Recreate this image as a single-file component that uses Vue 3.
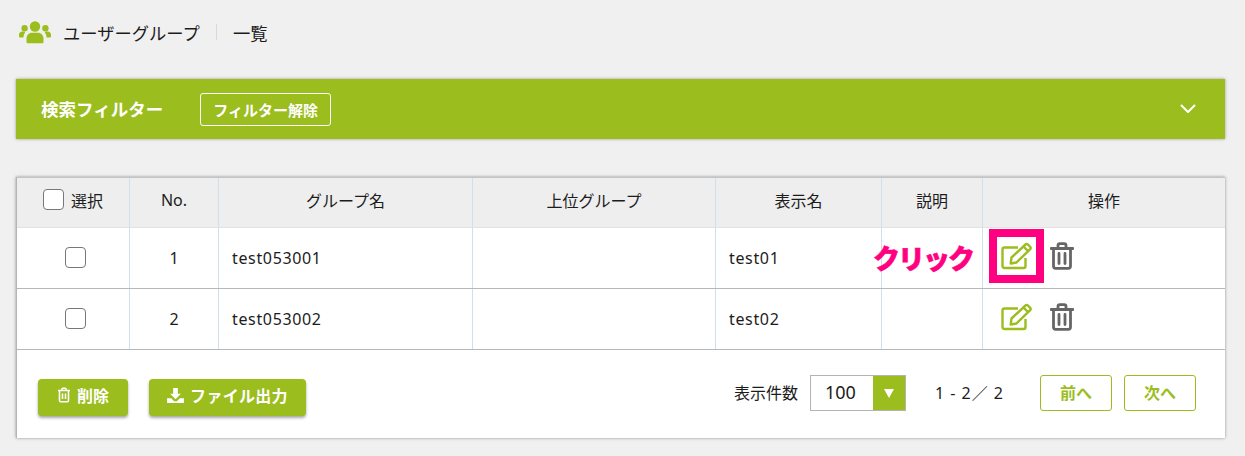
<template>
  <div class="page">
    <header class="title-row">
      <svg class="users-icon" viewBox="0 0 32 24" width="32" height="24">
        <circle cx="16" cy="6.5" r="5.2" />
        <circle cx="5.6" cy="8.2" r="3.2" />
        <circle cx="26.4" cy="8.2" r="3.2" />
        <path d="M7.5 22v-3.5c0-3.6 2.6-5.8 5.4-5.8h6.2c2.8 0 5.4 2.2 5.4 5.8V22c0 .8-.7 1.3-1.4 1.3H8.900c-.7 0-1.400-.5-1.400-1.300z" />
        <path d="M6.200 12.500c-1.100 1.300-1.700 3-1.700 5H1.300C.5 17.500 0 17 0 16.200v-1.400c0-1.900 1.500-3.200 3.200-3.200h1.800c.4 0 .8.300 1.200.900z" />
        <path d="M25.800 12.500c1.100 1.300 1.700 3 1.700 5h3.200c.8 0 1.300-.5 1.300-1.300v-1.400c0-1.900-1.500-3.200-3.200-3.200h-1.800c-.4 0-.8.300-1.200.900z" />
      </svg>
      <span class="title-main">ユーザーグループ</span>
      <span class="title-sep"></span>
      <span class="title-sub">一覧</span>
    </header>

    <section class="filter-bar">
      <span class="filter-title">検索フィルター</span>
      <button class="filter-clear">フィルター解除</button>
      <svg class="chevron" viewBox="0 0 16 10" width="16" height="10">
        <path d="M1.500 1.500 8 8l6.500-6.500" />
      </svg>
    </section>

    <section class="card">
      <div class="grid head">
        <div class="cell center select-head"><span class="check"></span><span>選択</span></div>
        <div class="cell center">No.</div>
        <div class="cell center">グループ名</div>
        <div class="cell center">上位グループ</div>
        <div class="cell center">表示名</div>
        <div class="cell center">説明</div>
        <div class="cell center">操作</div>
      </div>
      <div v-for="row in rows" :key="row.no" class="grid body">
        <div class="cell center check-cell"><span class="check"></span></div>
        <div class="cell center num">{{ row.no }}</div>
        <div class="cell latin">{{ row.group }}</div>
        <div class="cell"></div>
        <div class="cell latin">{{ row.display }}</div>
        <div class="cell"></div>
        <div class="cell actions">
          <svg class="edit-icon" viewBox="0 0 32 28" width="32" height="28">
            <path class="edit-box" d="M24.500 16v8c0 1.200-.8 2-2 2H3.500c-1.200 0-2-.8-2-2V7.500c0-1.200.8-2 2-2H17" />
            <path class="edit-pen" d="M10.500 15.500 24.500 2.500c.8-.7 1.700-.7 2.400 0l2.300 2.300c.7.7.7 1.700 0 2.400L15.500 20.500l-5.800 1z" />
            <path class="edit-pen" d="m22.500 4.500 4.800 4.800" />
          </svg>
          <svg class="trash-icon" viewBox="0 0 24 28" width="24" height="28">
            <path d="M1 6.500h22M8 6.500V3.500c0-1 .7-1.800 1.800-1.800h4.400c1.100 0 1.800.8 1.800 1.800v3M3.500 6.500V24c0 1.300.9 2.300 2.200 2.300h12.600c1.300 0 2.200-1 2.200-2.300V6.500M9 11.500v10M15 11.500v10" />
          </svg>
        </div>
      </div>
      <footer class="card-footer">
        <button class="solid-btn delete-btn">
          <svg viewBox="0 0 14 16" width="14" height="16">
            <path d="M1 3.500h12M5 3.500V2c0-.5.300-.8.800-.8h2.400c.5 0 .8.300.8.800v1.500M2.500 3.500v10c0 .7.500 1.200 1.200 1.200h6.600c.7 0 1.200-.5 1.200-1.200v-10M5.500 6.500v5.500M8.500 6.500v5.500" />
          </svg>
          削除
        </button>
        <button class="solid-btn export-btn">
          <svg class="dl" viewBox="0 0 18 16" width="17" height="15">
            <path d="M6.500 0h5v6h3.300L9 12 3.200 6h3.300z" />
            <path d="M0 11h4.500L7.500 14h3l3-3H18v5H0z" />
          </svg>
          <span class="export-label">ファイル出力</span>
        </button>
        <div class="pager">
          <span class="per-label">表示件数</span>
          <div class="per-select">
            <span class="per-value">100</span>
            <span class="per-arrow"><i></i></span>
          </div>
          <span class="range">1 - 2／ 2</span>
          <button class="page-btn prev">前へ</button>
          <button class="page-btn">次へ</button>
        </div>
      </footer>

      <span class="click-note">クリック</span>
      <span class="click-box"></span>
    </section>
  </div>
</template>

<script setup>
const rows = [
  { no: 1, group: 'test053001', display: 'test01' },
  { no: 2, group: 'test053002', display: 'test02' }
]
</script>

<style>
html, body {
  margin: 0;
  background: #f0f0f0;
}
</style>

<style scoped>
.page {
  width: 1245px;
  height: 456px;
  box-sizing: border-box;
  padding: 0 20px 0 16px;
  overflow: hidden;
  background: #f0f0f0;
  color: #1c1c1c;
  font-family: "Noto Sans", "Noto Sans CJK JP", sans-serif;
  font-size: 16px;
}

.title-row {
  display: flex;
  align-items: center;
  height: 64px;
  padding-left: 3px;
}
.users-icon {
  fill: #9bbd1e;
  margin-right: 12px;
}
.title-main,
.title-sub {
  font-size: 17.300px;
}
.title-sep {
  width: 1px;
  height: 16px;
  margin: 0 16px;
  background: #d8d8d8;
}

.filter-bar {
  display: flex;
  align-items: center;
  height: 60px;
  margin-top: 15px;
  padding: 0 29px 0 25px;
  background: #9bbd1e;
  box-shadow: 0 0 3px rgba(0, 0, 0, 0.35);
  color: #fff;
}
.filter-title {
  font-size: 17.500px;
  font-weight: 700;
  padding-bottom: 2px;
}
.filter-clear {
  width: 131px;
  height: 33px;
  margin-left: 37px;
  padding: 0;
  border: 1px solid #fff;
  border-radius: 3px;
  background: transparent;
  color: #fff;
  font: 700 15px "Noto Sans", "Noto Sans CJK JP", sans-serif;
}
.chevron {
  margin-left: auto;
  fill: none;
  stroke: #fff;
  stroke-width: 2;
  stroke-linecap: round;
  stroke-linejoin: round;
}

.card {
  position: relative;
  margin-top: 38px;
  height: 261px;
  box-sizing: border-box;
  background: #fff;
  border-left: 1px solid #b5b5b5;
  box-shadow: 0 0 3px rgba(0, 0, 0, 0.4);
}
.grid {
  display: grid;
  grid-template-columns: 113px 89px 254px 243px 166px 101px 1fr;
}
.head {
  height: 51px;
  background: #eee;
  border-top: 1px solid #c4c4c4;
  border-bottom: 1px solid #e2e2e2;
  box-sizing: border-box;
}
.head .cell {
  padding-bottom: 6px;
}
.body {
  height: 61px;
  box-sizing: border-box;
  border-bottom: 1px solid #b4b8ba;
}
.cell {
  display: flex;
  align-items: center;
  box-sizing: border-box;
  border-right: 1px solid #cfe0ea;
  padding-left: 13px;
}
.cell:last-child {
  border-right: 0;
}
.center {
  justify-content: center;
  padding-left: 0;
}
.latin {
  letter-spacing: 0.65px;
}
.select-head {
  gap: 7px;
}
.check-cell {
  padding: 0 0 2px 5px;
}
.check {
  width: 19px;
  height: 19px;
  border: 1px solid #777;
  border-radius: 4px;
  background: #fff;
}
.actions {
  gap: 17px;
  padding-left: 18px;
  padding-bottom: 4px;
}
.edit-icon {
  fill: none;
  stroke: #9bbd1e;
  stroke-width: 2.400;
  stroke-linejoin: round;
}
.trash-icon {
  fill: none;
  stroke: #666;
  stroke-width: 2.800;
  stroke-linecap: round;
  stroke-linejoin: round;
}

.card-footer {
  display: flex;
  align-items: flex-start;
  height: 88px;
  box-sizing: border-box;
  padding: 25px 29px 0 21px;
}
.solid-btn {
  display: flex;
  align-items: center;
  justify-content: center;
  gap: 6px;
  height: 37px;
  margin-top: 4px;
  padding: 0 0 5px;
  border: 0;
  border-radius: 4px;
  background: #9bbd1e;
  box-shadow: 0 2px 3px rgba(0, 0, 0, 0.35);
  color: #fff;
  font: 700 16px "Noto Sans", "Noto Sans CJK JP", sans-serif;
}
.solid-btn svg {
  fill: none;
  stroke: #fff;
  stroke-width: 1.600;
}
.solid-btn svg.dl {
  fill: #fff;
  stroke: none;
}
.delete-btn {
  width: 90px;
}
.export-btn {
  width: 157px;
  margin-left: 21px;
  gap: 6px;
}
.export-label {
  letter-spacing: 0.3px;
}
.pager {
  display: flex;
  align-items: center;
  margin-left: auto;
  height: 36px;
}
.per-label {
  font-size: 16px;
  padding-bottom: 3px;
}
.per-select {
  display: flex;
  width: 96px;
  height: 36px;
  margin-left: 12px;
  box-sizing: border-box;
  border: 1px solid #b4b4b4;
}
.per-value {
  flex: 1;
  padding-left: 14px;
  line-height: 32px;
  font-size: 18px;
}
.per-arrow {
  display: flex;
  align-items: center;
  justify-content: center;
  width: 32px;
  background: #9bbd1e;
}
.per-arrow i {
  width: 0;
  height: 0;
  border-left: 5px solid transparent;
  border-right: 5px solid transparent;
  border-top: 9px solid #fff;
}
.range {
  margin-left: 29px;
  padding-bottom: 3px;
  letter-spacing: 1px;
  font-size: 16px;
}
.page-btn {
  width: 72px;
  height: 36px;
  margin-left: 12px;
  padding: 0 0 3px;
  border: 1px solid #9bbd1e;
  border-radius: 3px;
  background: #fff;
  color: #9bbd1e;
  font: 700 16px "Noto Sans", "Noto Sans CJK JP", sans-serif;
}
.page-btn.prev {
  margin-left: 36px;
}

.click-note {
  position: absolute;
  left: 856px;
  top: 62px;
  color: #ff0080;
  font-size: 27px;
  font-weight: 900;
  line-height: 40px;
  letter-spacing: -2px;
  -webkit-text-stroke: 0.6px #ff0080;
}
.click-box {
  position: absolute;
  left: 972px;
  top: 52px;
  width: 55px;
  height: 54px;
  box-sizing: border-box;
  border: 8px solid #ff0080;
}
</style>
